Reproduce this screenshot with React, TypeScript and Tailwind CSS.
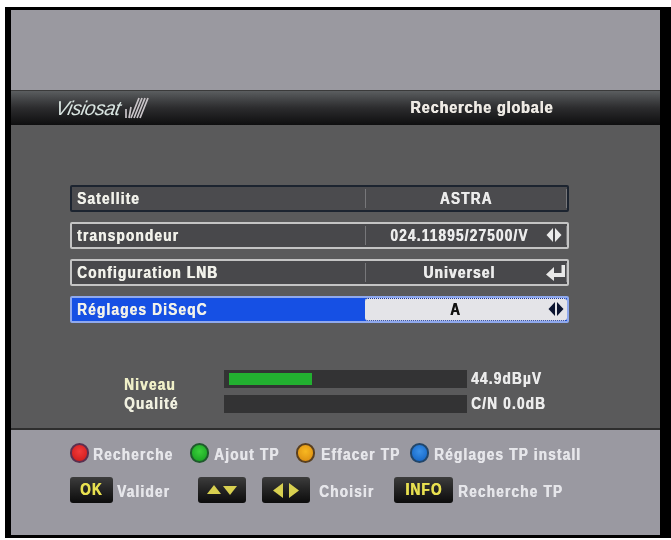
import React from "react";

const FONT = "font-['Liberation_Sans',sans-serif] font-bold";

// the receiver's OSD font is a heavy narrow face with wide spacing, so Liberation Sans gets squeezed
function Txt({ children, className = "origin-left" }: { children: React.ReactNode; className?: string }) {
    return (
        <span className={`inline-block scale-x-[0.85] whitespace-nowrap text-[16px] tracking-[1.4px] [text-shadow:0.7px_0_0_currentColor] ${className}`}>
            {children}
        </span>
    );
}

function LeftRight({ color }: { color: string }) {
    return (
        <svg width="16" height="14" viewBox="0 0 16 14" className="shrink-0">
            <polygon points="7,0 7,14 0.5,7" fill={color} />
            <polygon points="9,0 9,14 15.5,7" fill={color} />
        </svg>
    );
}

function EnterIcon() {
    return (
        <svg width="20" height="18" viewBox="0 0 20 18" className="shrink-0">
            <path d="M8 3 L0 10.5 L8 17 L8 13 L19 13 L19 1 L15.5 1 L15.5 9 L8 9 Z" fill="#e8e8e8" />
        </svg>
    );
}

interface RowProps {
    label: string;
    value: string;
    kind?: "disabled" | "normal" | "active";
    icon?: React.ReactNode;
    pad?: string;
}

function Row({ label, value, kind = "normal", icon, pad }: RowProps) {
    const shell =
        kind === "disabled"
            ? "border-[#1c2430] bg-[#4b4b4e]"
            : kind === "active"
              ? "border-[#8fa9ee] bg-[#1650e4]"
              : "border-[#c4c4c4] bg-[#48484b]";
    return (
        <div className={`flex h-[27px] items-stretch rounded-[2px] border-2 ${shell}`}>
            <div className="flex w-[293px] shrink-0 items-center pl-[5px] text-[#f1f1ea]">
                <Txt>{label}</Txt>
            </div>
            {kind === "active" ? (
                <div className="relative flex min-w-0 flex-1 items-center justify-center rounded-[3px] border-y border-dotted border-[#16349c] bg-[#e4e4e8] pr-[21px] text-[#111]">
                    <Txt className="origin-center">{value}</Txt>
                    <div className="absolute right-[3px] top-[3px]">{icon}</div>
                </div>
            ) : (
                <div className="relative my-[2px] flex min-w-0 flex-1 items-center justify-center border-l border-r border-[#77777a] text-[#ececec]">
                    <span className={pad}>
                        <Txt className="origin-center">{value}</Txt>
                    </span>
                    {icon && <div className="absolute bottom-0 right-0">{icon}</div>}
                </div>
            )}
        </div>
    );
}

function Ball({ className }: { className: string }) {
    return <div className={`h-[20px] w-[19px] shrink-0 rounded-full border-2 ${className}`} />;
}

function Key({ className, children }: { className: string; children: React.ReactNode }) {
    return (
        <div className={`flex h-[26px] shrink-0 items-center justify-center rounded-[3px] bg-gradient-to-b from-[#3d3d3d] to-[#0c0c0c] text-[#e8e050] ${className}`}>
            {children}
        </div>
    );
}

export default function App() {
    return (
        <div className={`h-[540px] w-[671px] overflow-hidden bg-white pl-[5px] pt-[7px] ${FONT}`}>
            <div className="flex h-[531px] w-[666px] flex-col border-l-[6px] border-t-[3px] border-b-[3px] border-r-[11px] border-black blur-[0.35px]">
                {/* top band */}
                <div className="h-[80px] shrink-0 bg-[#9a99a0]" />

                {/* title bar */}
                <div className="flex h-[35px] shrink-0 items-center justify-between border-t border-[#3a3a3a] bg-gradient-to-b from-[#5b5e60] via-[#2c2c2e] to-[#0f0f10] pl-[45px] pr-[107px]">
                    <div className="flex items-center">
                        <span className="inline-block w-[69px] origin-left -skew-x-12 scale-x-[0.98] text-[20px] font-normal italic leading-none tracking-[-0.5px] text-[#d8e4e0]">
                            Visiosat
                        </span>
                        <svg width="24" height="22" viewBox="0 0 24 22">
                            <path d="M1 21 L1 12 M4 21 L6 10 M6 21 L14 1 M9 21 L17 1 M12 21 L20 1 M15 21 L23 1" stroke="#c9c4c8" strokeWidth="1.7" fill="none" />
                        </svg>
                    </div>
                    <div className="text-[#eeeae4]">
                        <span className="inline-block origin-right scale-x-[0.85] whitespace-nowrap text-[17px] tracking-[1px] [text-shadow:0.7px_0_0_currentColor]">
                            Recherche globale
                        </span>
                    </div>
                </div>

                {/* settings panel */}
                <div className="flex flex-1 flex-col bg-[#5a5a5b] px-[59px] pt-[60px]">
                    <div className="flex w-[499px] flex-col gap-[10px]">
                        <Row label="Satellite" value="ASTRA" kind="disabled" />
                        <Row label="transpondeur" value="024.11895/27500/V" pad="pr-[14px]" icon={<div className="pb-[3px] pr-[4px]"><LeftRight color="#ececec" /></div>} />
                        <Row label="Configuration LNB" value="Universel" pad="pr-[14px]" icon={<EnterIcon />} />
                        <Row label="Réglages DiSeqC" value="A" kind="active" icon={<LeftRight color="#0b1430" />} />
                    </div>

                    {/* signal meters */}
                    <div className="mt-[47px] flex flex-col gap-[7px]">
                        <div className="flex h-[18px] items-center">
                            <span className="w-[154px] shrink-0 pl-[54px] pt-[12px] text-[#f0f0c8]">
                                <Txt>Niveau</Txt>
                            </span>
                            <div className="flex h-full w-[243px] shrink-0 items-center bg-[#333334] pl-[5px]">
                                <div className="h-[12px] w-[83px] bg-[#22b030]" />
                            </div>
                            <span className="pl-[4px] text-[#ececec]">
                                <Txt>44.9dBµV</Txt>
                            </span>
                        </div>
                        <div className="flex h-[18px] items-center">
                            <span className="w-[154px] shrink-0 pl-[54px] text-[#f0f0e0]">
                                <Txt>Qualité</Txt>
                            </span>
                            <div className="h-full w-[243px] shrink-0 bg-[#333334]" />
                            <span className="pl-[4px] text-[#ececec]">
                                <Txt>C/N 0.0dB</Txt>
                            </span>
                        </div>
                    </div>
                </div>

                {/* key help */}
                <div className="flex h-[107px] shrink-0 flex-col gap-[11px] border-t-2 border-[#2e2e2e] bg-[#9a99a1] pl-[59px] pt-[11px] text-[#e6e6ea]">
                    <div className="flex h-[24px] items-center">
                        <Ball className="border-[#5a3050] bg-[radial-gradient(circle_at_50%_40%,#f23a3a,#c81818)]" />
                        <span className="ml-[4px] w-[97px] shrink-0 pt-[3px]"><Txt>Recherche</Txt></span>
                        <Ball className="border-[#1f5a2c] bg-[radial-gradient(circle_at_50%_40%,#3ad03a,#149a20)]" />
                        <span className="ml-[5px] w-[82px] shrink-0 pt-[3px]"><Txt>Ajout TP</Txt></span>
                        <Ball className="border-[#5a4020] bg-[radial-gradient(circle_at_50%_40%,#f8b820,#d88810)]" />
                        <span className="ml-[6px] w-[89px] shrink-0 pt-[3px]"><Txt>Effacer TP</Txt></span>
                        <Ball className="border-[#22466a] bg-[radial-gradient(circle_at_50%_40%,#3a90e8,#1060c0)]" />
                        <span className="ml-[5px] pt-[3px]"><Txt>Réglages TP install</Txt></span>
                    </div>
                    <div className="flex items-center">
                        <Key className="w-[43px]"><Txt className="origin-center">OK</Txt></Key>
                        <span className="ml-[4px] w-[81px] shrink-0 pt-[4px]"><Txt>Valider</Txt></span>
                        <Key className="w-[48px]">
                            <svg width="30" height="10" viewBox="0 0 30 10">
                                <polygon points="7,0 14,9 0,9" fill="#d8d050" />
                                <polygon points="16,1 30,1 23,10" fill="#d8d050" />
                            </svg>
                        </Key>
                        <Key className="ml-[16px] w-[48px]">
                            <svg width="26" height="15" viewBox="0 0 26 15">
                                <polygon points="10,0 10,15 0,7.5" fill="#d8d050" />
                                <polygon points="16,0 16,15 26,7.5" fill="#d8d050" />
                            </svg>
                        </Key>
                        <span className="ml-[9px] w-[75px] shrink-0 pt-[4px]"><Txt>Choisir</Txt></span>
                        <Key className="w-[59px]"><Txt className="origin-center">INFO</Txt></Key>
                        <span className="ml-[5px] pt-[4px]"><Txt>Recherche TP</Txt></span>
                    </div>
                </div>
            </div>
        </div>
    );
}
